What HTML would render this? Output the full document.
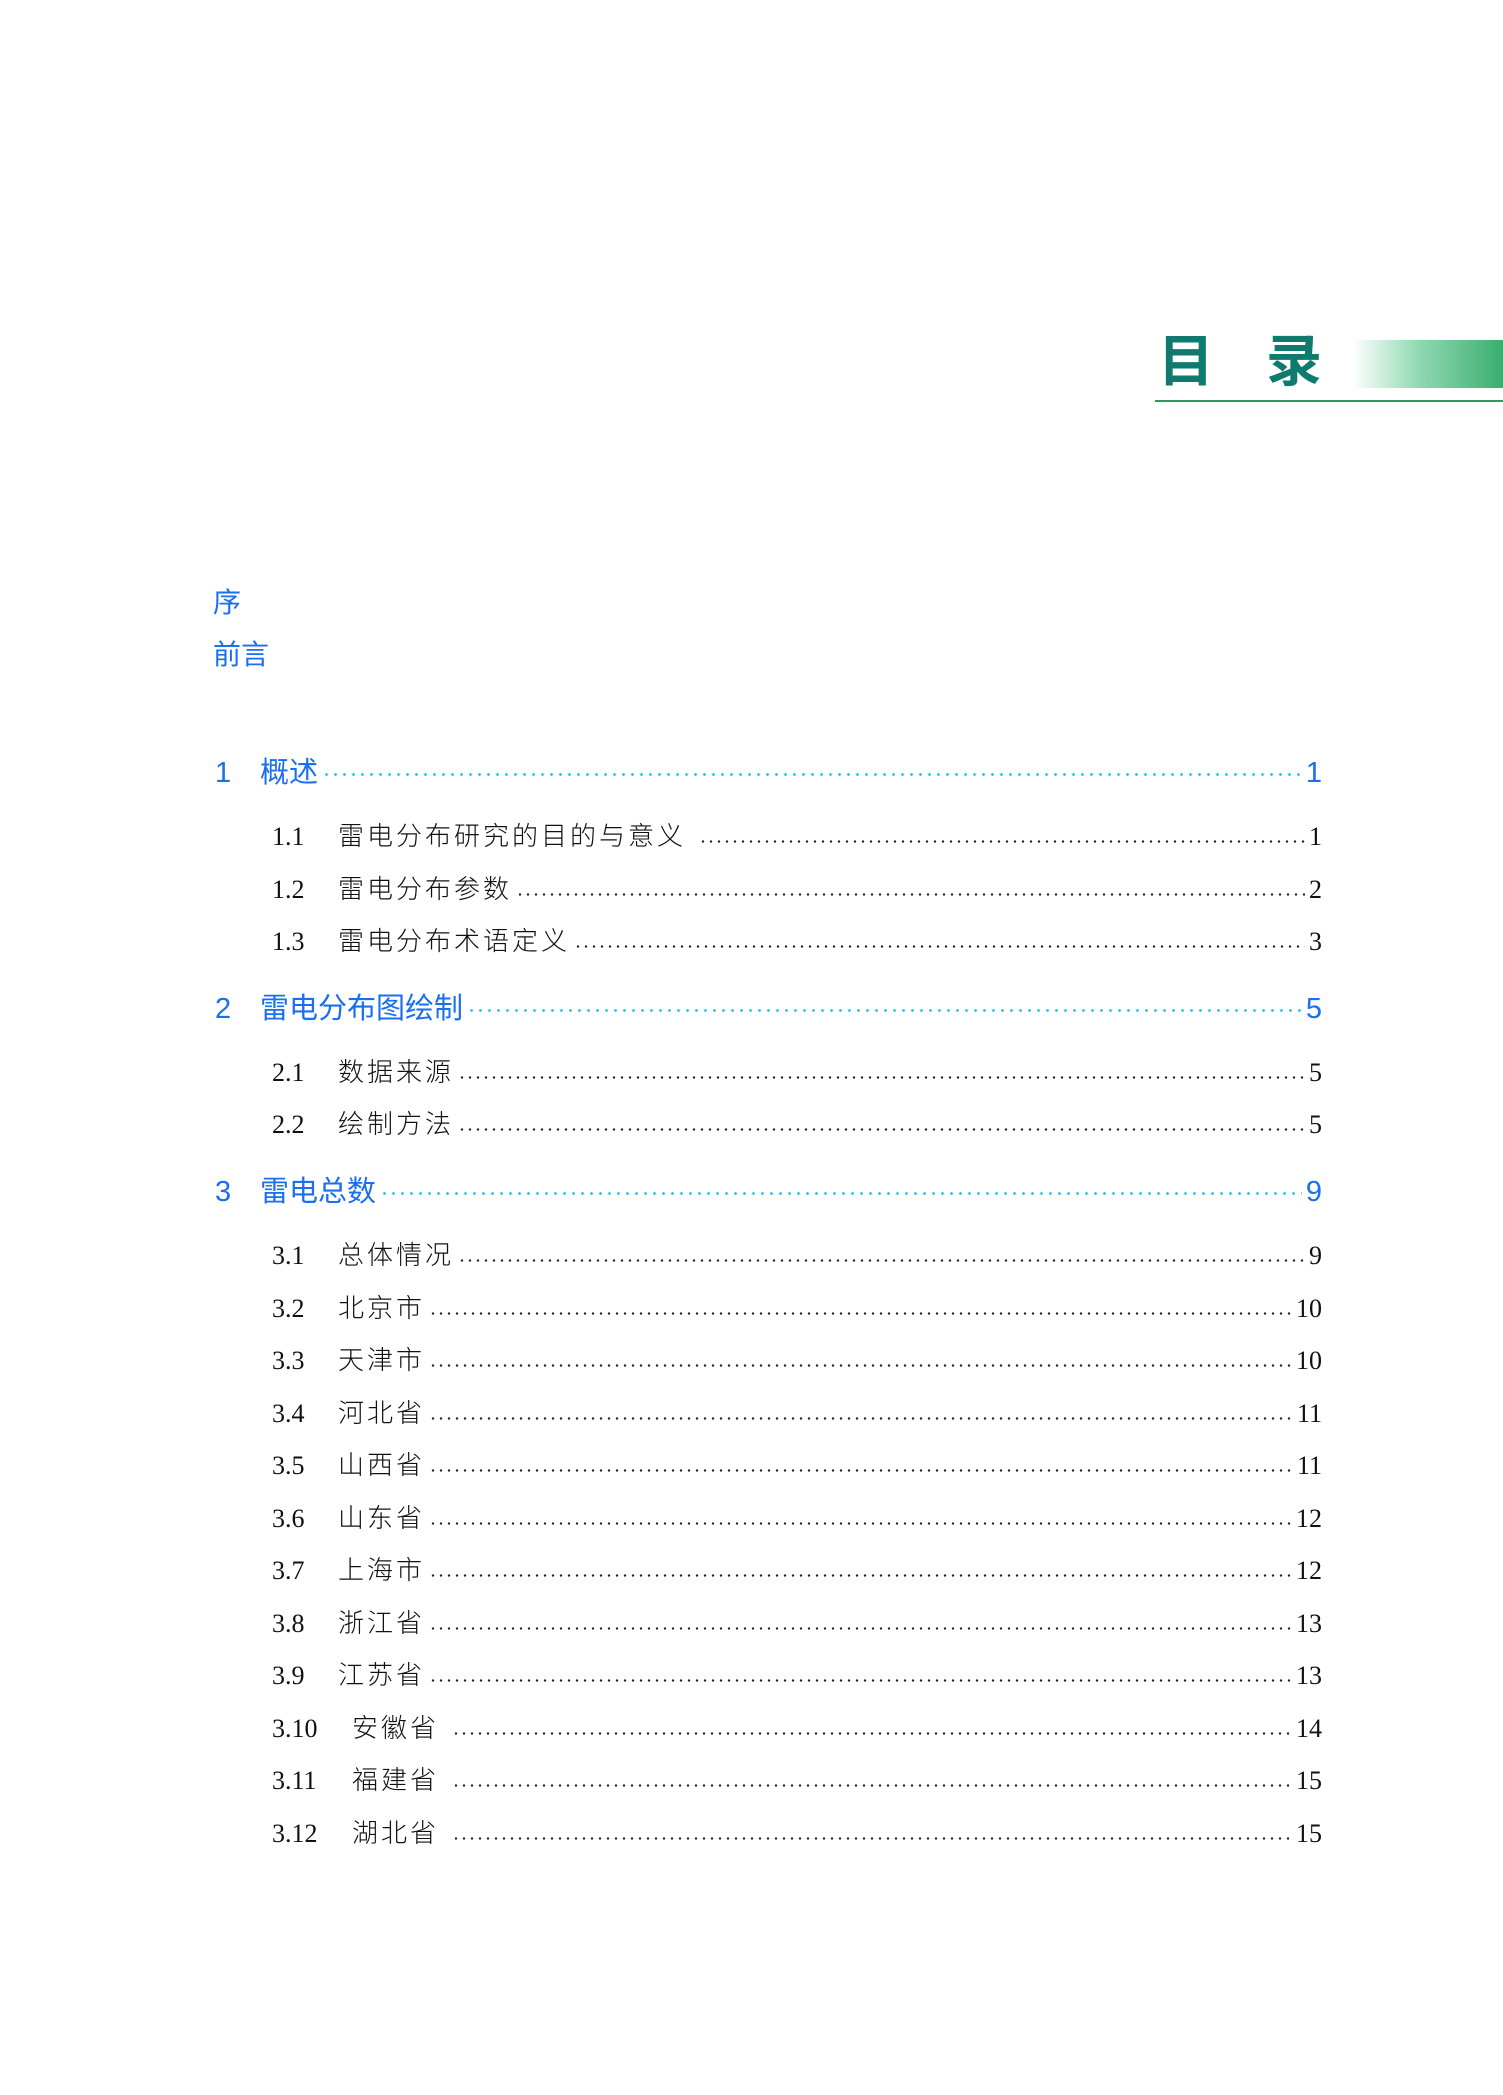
<!DOCTYPE html>
<html><head><meta charset="utf-8"><style>
html,body{margin:0;padding:0;background:#fff;width:1503px;height:2095px;overflow:hidden;position:relative}
.t{position:absolute;font-family:"Liberation Sans","Noto Sans CJK SC",sans-serif;font-weight:bold;color:#0f7a6e;font-size:56px;line-height:56px;top:334px}
.bar{position:absolute;left:1352px;top:340px;width:151px;height:48px;background:linear-gradient(to right,#fff,#8fd8b2 45%,#3aae6e)}
.ln{position:absolute;left:1155px;top:400px;width:348px;height:2px;background:#2a9a5e}
.b{position:absolute;left:213px;color:#1a6ef0;font-family:"Liberation Sans","Noto Sans CJK SC",sans-serif;font-size:28px;line-height:34px}
.wrap{position:absolute;left:0;top:-4px;width:1503px}
.row{position:absolute;width:1322px;height:36px;display:flex;align-items:baseline;box-sizing:border-box}
.row .n{display:inline-block;flex:none}
.row .tx{white-space:nowrap}
.row .d{flex:1;height:3px;margin:0 4px;align-self:flex-end;margin-bottom:9px}
.sec{left:0;padding-left:215px;color:#1a6ef0;font-family:"Liberation Sans","Noto Sans CJK SC",sans-serif;font-size:29px}
.sec .n{width:45px}
.sec .d{background:radial-gradient(circle,#1ec8f0 1.2px,transparent 1.6px) 0 0/9px 3px repeat-x}
.sub{left:0;padding-left:272px;color:#111;font-family:"Liberation Serif","Noto Sans CJK SC",serif;font-size:26px}
.sub .n{width:66px}
.sub .n.w{width:80px}
.sub .tx{font-family:"Noto Sans CJK SC",sans-serif;font-weight:300;letter-spacing:3px}
.sub .d{background:radial-gradient(circle,#222 1px,transparent 1.4px) 0 0/8px 3px repeat-x}
</style></head><body>
<div class="t" style="left:1158px">目</div>
<div class="t" style="left:1266px">录</div>
<div class="bar"></div><div class="ln"></div>
<div class="b" style="top:586px">序</div>
<div class="b" style="top:638px">前言</div>
<div class="wrap">
<div class="row sec" style="top:753px"><span class="n">1</span><span class="tx">概述</span><span class="d"></span><span>1</span></div>
<div class="row sub" style="top:820px"><span class="n">1.1</span><span class="tx">雷电分布研究的目的与意义&nbsp;</span><span class="d"></span><span>1</span></div>
<div class="row sub" style="top:873px"><span class="n">1.2</span><span class="tx">雷电分布参数</span><span class="d"></span><span>2</span></div>
<div class="row sub" style="top:925px"><span class="n">1.3</span><span class="tx">雷电分布术语定义</span><span class="d"></span><span>3</span></div>
<div class="row sec" style="top:989px"><span class="n">2</span><span class="tx">雷电分布图绘制</span><span class="d"></span><span>5</span></div>
<div class="row sub" style="top:1056px"><span class="n">2.1</span><span class="tx">数据来源</span><span class="d"></span><span>5</span></div>
<div class="row sub" style="top:1108px"><span class="n">2.2</span><span class="tx">绘制方法</span><span class="d"></span><span>5</span></div>
<div class="row sec" style="top:1172px"><span class="n">3</span><span class="tx">雷电总数</span><span class="d"></span><span>9</span></div>
<div class="row sub" style="top:1239px"><span class="n">3.1</span><span class="tx">总体情况</span><span class="d"></span><span>9</span></div>
<div class="row sub" style="top:1292px"><span class="n">3.2</span><span class="tx">北京市</span><span class="d"></span><span>10</span></div>
<div class="row sub" style="top:1344px"><span class="n">3.3</span><span class="tx">天津市</span><span class="d"></span><span>10</span></div>
<div class="row sub" style="top:1397px"><span class="n">3.4</span><span class="tx">河北省</span><span class="d"></span><span>11</span></div>
<div class="row sub" style="top:1449px"><span class="n">3.5</span><span class="tx">山西省</span><span class="d"></span><span>11</span></div>
<div class="row sub" style="top:1502px"><span class="n">3.6</span><span class="tx">山东省</span><span class="d"></span><span>12</span></div>
<div class="row sub" style="top:1554px"><span class="n">3.7</span><span class="tx">上海市</span><span class="d"></span><span>12</span></div>
<div class="row sub" style="top:1607px"><span class="n">3.8</span><span class="tx">浙江省</span><span class="d"></span><span>13</span></div>
<div class="row sub" style="top:1659px"><span class="n">3.9</span><span class="tx">江苏省</span><span class="d"></span><span>13</span></div>
<div class="row sub" style="top:1712px"><span class="n w">3.10</span><span class="tx">安徽省&nbsp;</span><span class="d"></span><span>14</span></div>
<div class="row sub" style="top:1764px"><span class="n w">3.11</span><span class="tx">福建省&nbsp;</span><span class="d"></span><span>15</span></div>
<div class="row sub" style="top:1817px"><span class="n w">3.12</span><span class="tx">湖北省&nbsp;</span><span class="d"></span><span>15</span></div>
</div>
</body></html>
